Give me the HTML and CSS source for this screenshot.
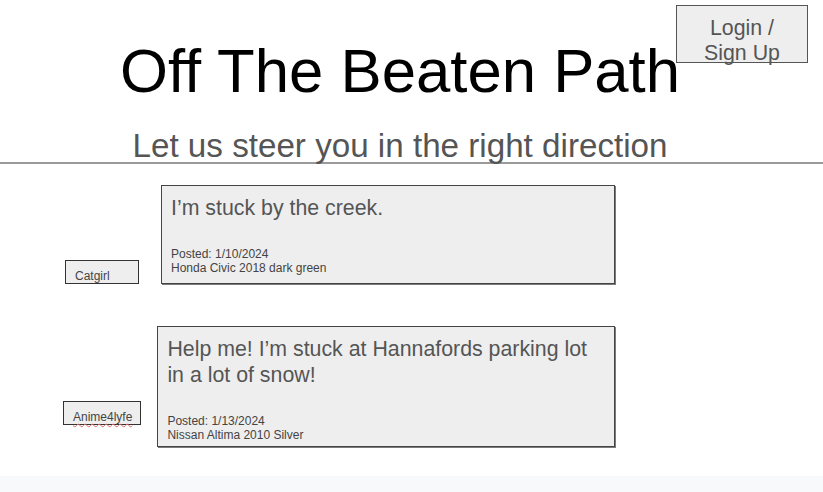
FILE: index.html
```html
<!DOCTYPE html>
<html lang="en">
<head>
<meta charset="utf-8">
<title>Off The Beaten Path</title>
<link rel="stylesheet" href="styles.css">
</head>
<body>
<div class="page">
  <header class="header">
    <div class="header-inner">
      <h1 class="title">Off The Beaten Path</h1>
      <p class="subtitle">Let us steer you in the right direction</p>
    </div>
    <button class="login">Login /<br>Sign Up</button>
  </header>
  <main class="feed">
    <div class="post post--first">
      <div class="user">Catgirl</div>
      <div class="card card--first">
        <div class="card-title">I’m stuck by the creek.</div>
        <div class="meta">Posted: 1/10/2024<br>Honda Civic 2018 dark green</div>
      </div>
    </div>
    <div class="post post--second">
      <div class="user"><span class="misspelled">Anime4lyfe</span></div>
      <div class="card card--second">
        <div class="card-title">Help me! I’m stuck at Hannafords parking lot in a lot of snow!</div>
        <div class="meta">Posted: 1/13/2024<br>Nissan Altima 2010 Silver</div>
      </div>
    </div>
  </main>
</div>
</body>
</html>
```

FILE: styles.css
```css
html, body {
  margin: 0;
  padding: 0;
}
body {
  background: #f8f9fb;
  font-family: "Liberation Sans", Arial, sans-serif;
}
.page {
  background: #ffffff;
  min-height: 476px;
  box-sizing: border-box;
}
.header {
  position: relative;
  border-bottom: 2px solid #9a9a9a;
  padding-top: 40px;
}
.header-inner {
  width: 800px;
  text-align: center;
}
.title {
  margin: 0;
  font-size: 61.7px;
  line-height: 61px;
  font-weight: normal;
  color: #000;
}
.subtitle {
  margin: 28px 0 0;
  font-size: 33.2px;
  line-height: 33px;
  height: 33px;
  color: #555;
}
.login {
  position: absolute;
  top: 5px;
  right: 15px;
  width: 132px;
  height: 58px;
  box-sizing: border-box;
  margin: 0;
  padding: 10px 0 0;
  background: #eeeeee;
  border: 1px solid #555;
  font-family: "Liberation Sans", Arial, sans-serif;
  font-size: 21.33px;
  line-height: 25px;
  color: #555;
  text-align: center;
  display: block;
  overflow: visible;
}
.feed {
  padding-top: 21px;
}
.post {
  display: flex;
  align-items: flex-start;
}
.post--first {
  padding-left: 65px;
  gap: 22px;
}
.post--second {
  margin-top: 42px;
  padding-left: 63px;
  gap: 16px;
}
.user {
  box-sizing: border-box;
  margin-top: 75px;
  height: 24px;
  min-width: 74px;
  padding: 8px 8px 0 9px;
  background: #eeeeee;
  border: 1px solid #333;
  font-size: 12px;
  line-height: 14px;
  color: #444;
  white-space: nowrap;
}
.misspelled {
  text-decoration: underline wavy #e06a66;
  text-decoration-thickness: 1px;
  text-underline-offset: 2px;
}
.card {
  box-sizing: border-box;
  background: #eeeeee;
  border: 1px solid #444;
  box-shadow: 1px 1px 0 #7a7a7a;
  padding: 9px 9px 4px;
}
.card--first {
  width: 454px;
  padding-bottom: 8px;
}
.card--second {
  width: 458px;
  padding-bottom: 4px;
}
.card-title {
  font-size: 21.33px;
  line-height: 26px;
  color: #555;
}
.meta {
  margin-top: 26px;
  font-size: 12px;
  line-height: 14px;
  color: #444;
}
```
